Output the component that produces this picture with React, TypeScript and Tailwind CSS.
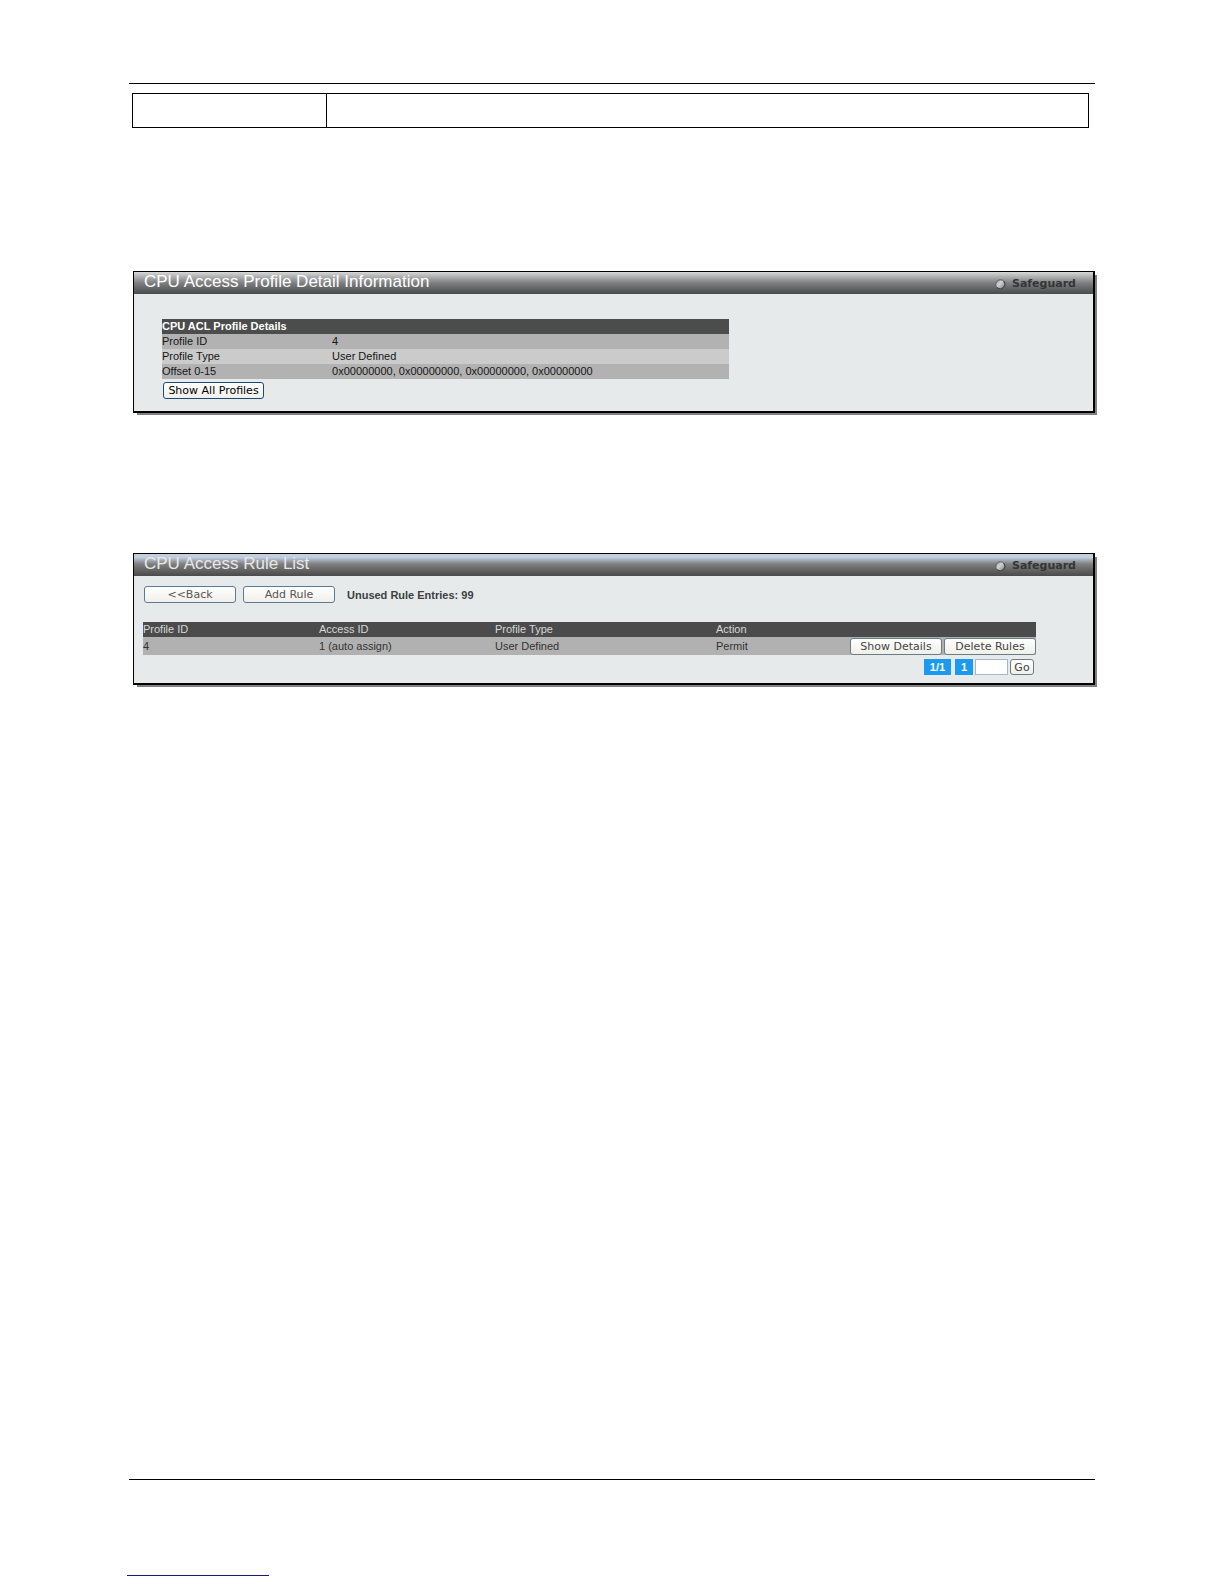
import type { ReactNode } from "react";

const buttonStyle =
  "flex items-center justify-center rounded-[3px] border bg-linear-to-b from-white to-[#f0efe9] font-['DejaVu_Sans',sans-serif] text-[11px] leading-[15px] whitespace-nowrap";

function StatusBulb() {
  return (
    <svg width="11" height="11" viewBox="0 0 11 11" aria-hidden="true">
      <defs>
        <linearGradient id="bulb" x1="0" y1="0" x2="1" y2="1">
          <stop offset="0" stopColor="#909090" />
          <stop offset="0.4" stopColor="#d2d2d2" />
          <stop offset="1" stopColor="#77797a" />
        </linearGradient>
      </defs>
      <circle cx="5.5" cy="5.5" r="4.7" fill="url(#bulb)" stroke="#5a5c5d" strokeWidth="1" />
      <path d="M2.2 8.8A4.7 4.7 0 0 0 8.8 2.2" fill="none" stroke="#3c3e3f" strokeWidth="1" />
    </svg>
  );
}

function Panel({
  title,
  headerClass,
  children,
}: {
  title: string;
  headerClass: string;
  children: ReactNode;
}) {
  return (
    <section className="ml-1 border border-r-2 border-b-2 border-black bg-[#e6eaeb] shadow-[3px_3px_0_-1px_#808080]">
      <header className={`flex h-[22px] justify-between pr-[17px] pl-[10px] ${headerClass}`}>
        <h2 className="text-[17px] leading-5">{title}</h2>
        <div className="flex items-center gap-[6px] pt-[2px]">
          <StatusBulb />
          <span className="font-['DejaVu_Sans',sans-serif] text-[11px] leading-[14px] font-bold text-[#333536]">
            Safeguard
          </span>
        </div>
      </header>
      {children}
    </section>
  );
}

const details = [
  { label: "Profile ID", value: "4", tone: "bg-[#b2b2b2]" },
  { label: "Profile Type", value: "User Defined", tone: "bg-[#cbcbcb]" },
  { label: "Offset 0-15", value: "0x00000000, 0x00000000, 0x00000000, 0x00000000", tone: "bg-[#b2b2b2]" },
];

function ProfileDetails() {
  return (
    <Panel
      title="CPU Access Profile Detail Information"
      headerClass="bg-linear-to-b from-[#d8d8d8] via-[#7e7f80] to-[#4a4b4c] text-white"
    >
      <div className="px-7 pt-[25px] pb-3">
        <table className="w-full max-w-[567px] table-fixed text-left text-[11px] leading-[15px] text-[#161616]">
          <colgroup>
            <col className="w-[30%]" />
            <col />
          </colgroup>
          <thead>
            <tr className="bg-[#4b4c4c] text-white">
              <th colSpan={2} className="font-bold">
                CPU ACL Profile Details
              </th>
            </tr>
          </thead>
          <tbody>
            {details.map((row) => (
              <tr key={row.label} className={row.tone}>
                <th scope="row" className="font-normal">
                  {row.label}
                </th>
                <td>{row.value}</td>
              </tr>
            ))}
          </tbody>
        </table>
        <button type="button" className={`${buttonStyle} mt-[3px] ml-px h-[17px] w-[101px] border-[#1c4a78] text-black`}>
          Show All Profiles
        </button>
      </div>
    </Panel>
  );
}

function RuleList() {
  return (
    <Panel
      title="CPU Access Rule List"
      headerClass="bg-linear-to-b from-[#c1cfdf] from-15% via-[#808081] via-45% to-[#4a4a4a] text-[#e8e8e8]"
    >
      <div className="pt-[9px] pr-[57px] pb-2 pl-[9px] text-[11px] text-[#333]">
        <div className="flex items-center pl-px">
          <button type="button" className={`${buttonStyle} h-[17px] w-[92px] border-[#5b7a94] text-[#555]`}>
            &lt;&lt;Back
          </button>
          <button type="button" className={`${buttonStyle} ml-[7px] h-[17px] w-[92px] border-[#5b7a94] text-[#555]`}>
            Add Rule
          </button>
          <span className="ml-3 pt-[3px] leading-[15px] font-bold text-[#3c3f40]">Unused Rule Entries: 99</span>
        </div>
        <table className="mt-[19px] w-full table-fixed text-left leading-[15px]">
          <colgroup>
            <col className="w-[176px]" />
            <col className="w-[176px]" />
            <col className="w-[221px]" />
            <col className="w-[133px]" />
            <col />
          </colgroup>
          <thead>
            <tr className="bg-[#4b4b4b] text-[#d8d8d8]">
              <th className="font-normal">Profile ID</th>
              <th className="font-normal">Access ID</th>
              <th className="font-normal">Profile Type</th>
              <th className="font-normal">Action</th>
              <td></td>
            </tr>
          </thead>
          <tbody>
            <tr className="bg-[#b1b1b1]">
              <td>4</td>
              <td>1 (auto assign)</td>
              <td>User Defined</td>
              <td>Permit</td>
              <td>
                <div className="flex h-[18px] items-center justify-end gap-[2px]">
                  <button type="button" className={`${buttonStyle} h-[17px] w-[92px] border-[#6a7c88] text-[#444]`}>
                    Show Details
                  </button>
                  <button type="button" className={`${buttonStyle} h-[17px] w-[92px] border-[#6a7c88] text-[#444]`}>
                    Delete Rules
                  </button>
                </div>
              </td>
            </tr>
          </tbody>
        </table>
        <nav aria-label="Pages" className="mt-1 flex items-center justify-end pr-[2px]">
          <span className="mr-1 flex h-4 w-[27px] items-center justify-center bg-[#1b9af0] font-bold text-white">1/1</span>
          <a href="#page-1" className="mr-[2px] flex h-4 w-[18px] items-center justify-center bg-[#1b9af0] font-bold text-white">
            1
          </a>
          <input aria-label="Page number" className="mr-[2px] h-4 w-[33px] border border-[#a3b8cc] bg-white px-1" />
          <button type="button" className={`${buttonStyle} h-4 w-6 border-[#6a7c88] text-[#444]`}>
            Go
          </button>
        </nav>
      </div>
    </Panel>
  );
}

export default function App() {
  return (
    <main className="min-h-screen bg-white px-[129px] pt-[83px] font-['Liberation_Sans',Arial,sans-serif]">
      <hr className="border-t border-black" />
      <div className="mt-[9px] mr-[6px] ml-[3px] flex h-[35px] border border-black">
        <div className="w-[194px] border-r border-black"></div>
        <div className="flex-1"></div>
      </div>
      <div className="mt-[143px]">
        <ProfileDetails />
      </div>
      <div className="mt-[140px]">
        <RuleList />
      </div>
      <hr className="mt-[794px] border-t border-black" />
      <div className="mt-[95px] -ml-[2px] w-[142px] border-t border-[#1a1a7c]"></div>
    </main>
  );
}
